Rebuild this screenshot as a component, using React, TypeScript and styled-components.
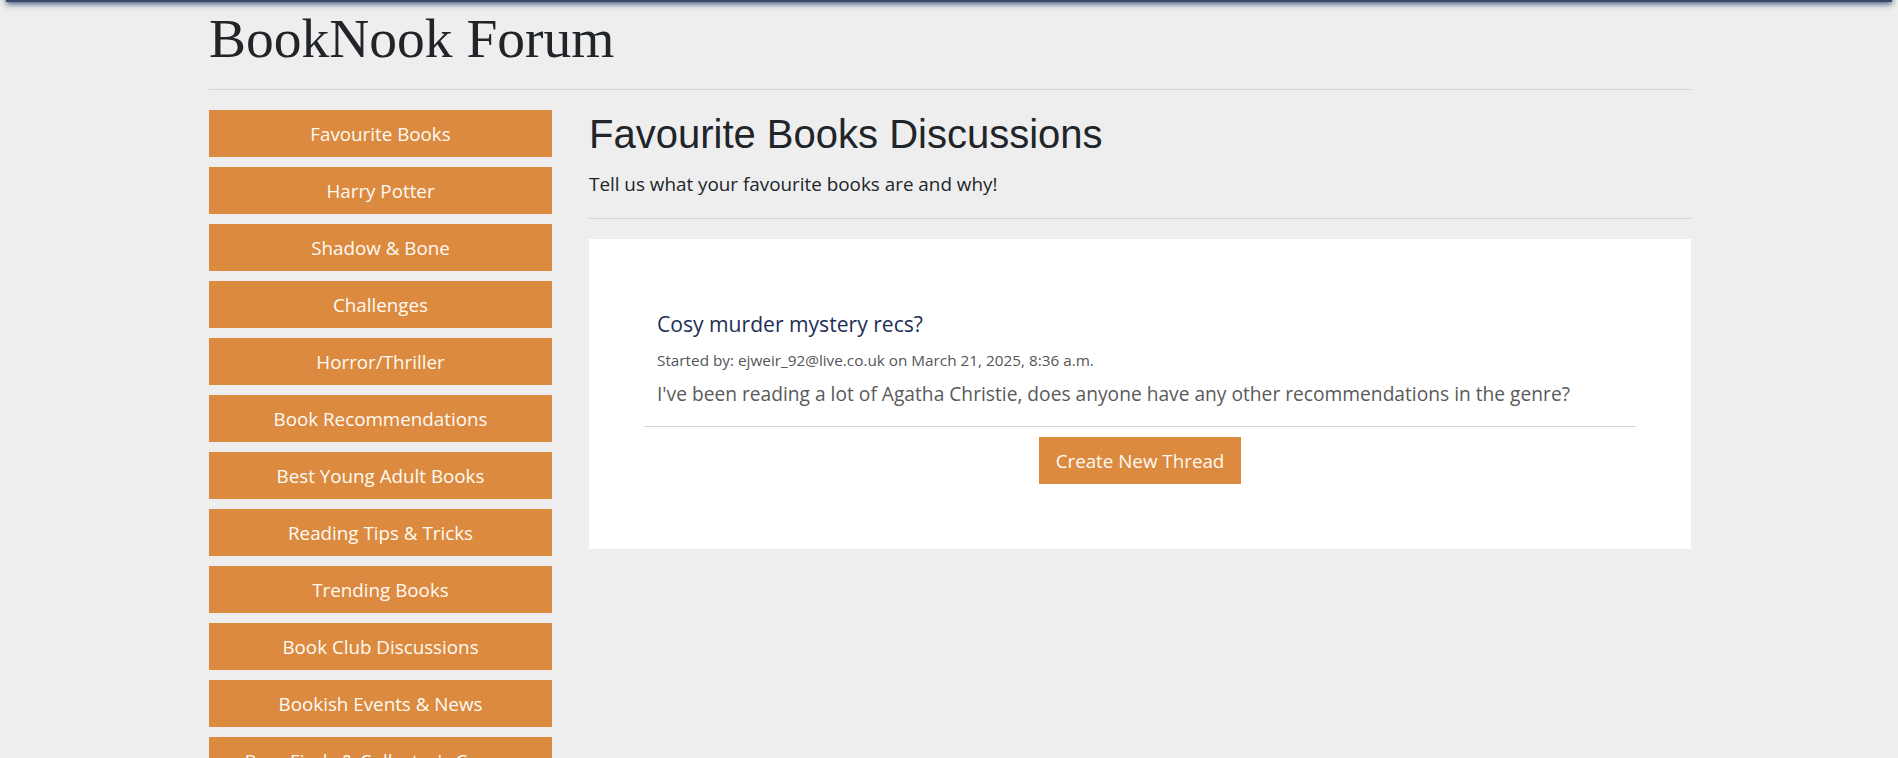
import React from "react";
import styled, { createGlobalStyle } from "styled-components";

const GlobalStyle = createGlobalStyle`
  html, body {
    margin: 0;
    padding: 0;
    background: #eeeeee;
  }
  body {
    font-family: "Open Sans", "Noto Sans", Arial, sans-serif;
    color: #212529;
    overflow: hidden;
  }
  * { box-sizing: border-box; }
`;

const TopShadow = styled.div`
  position: fixed;
  top: -40px;
  left: 6px;
  right: 6px;
  height: 42px;
  background: #3a4a6b;
  box-shadow: 0 2px 6px rgba(40, 60, 100, 0.85);
  z-index: 10;
`;

const Page = styled.div`
  width: 1482px;
  margin-left: calc(50% - 740px);
`;

const Header = styled.header`
  padding-top: 6px;
`;

const SiteTitle = styled.h1`
  margin: 0;
  font-family: "Liberation Serif", "Times New Roman", serif;
  font-weight: 400;
  font-size: 55.5px;
  line-height: 66px;
  color: #212529;
`;

const Rule = styled.hr<{ $top: number; $bottom: number }>`
  border: 0;
  border-top: 1px solid #d4d4d4;
  margin: ${(p) => p.$top}px 0 ${(p) => p.$bottom}px;
  height: 0;
`;

const Layout = styled.div`
  display: grid;
  grid-template-columns: 343px 1fr;
  column-gap: 37px;
  align-items: start;
`;

const Sidebar = styled.nav`
  display: flex;
  flex-direction: column;
  gap: 10px;
`;

const NavButton = styled.a`
  display: block;
  height: 47px;
  padding-top: 2px;
  line-height: 45px;
  background: #db8a3f;
  color: #fffaf4;
  text-align: center;
  text-decoration: none;
  font-size: 18.8px;
  white-space: nowrap;
  overflow: hidden;
`;

const Main = styled.main`
  display: flex;
  flex-direction: column;
`;

const Heading = styled.h2`
  margin: 0 0 10px;
  font-family: "Liberation Sans", Arial, sans-serif;
  font-weight: 400;
  font-size: 40px;
  line-height: 48px;
  color: #212529;
`;

const Lead = styled.p`
  margin: 0;
  padding-top: 1px;
  font-size: 18.85px;
  line-height: 30px;
  color: #212529;
`;

const Card = styled.section`
  background: #ffffff;
  padding: 73px 55px 65px;
  display: flex;
  flex-direction: column;
`;

const Thread = styled.article`
  padding: 0 13px;
`;

const ThreadTitle = styled.a`
  display: block;
  font-size: 21.1px;
  line-height: 24px;
  color: #1d2f56;
  text-decoration: none;
`;

const ThreadMeta = styled.div`
  margin-top: 14px;
  font-size: 15.3px;
  line-height: 21px;
  color: #555555;
`;

const ThreadBody = styled.p`
  margin: 9px 0 0;
  font-size: 19.2px;
  line-height: 28px;
  color: #5a5a5a;
`;

const Actions = styled.div`
  display: flex;
  justify-content: center;
`;

const PrimaryButton = styled.button`
  border: 0;
  height: 47px;
  padding: 1px 16.5px 0;
  background: #db8a3f;
  color: #fffaf4;
  font-family: inherit;
  font-size: 18.8px;
  cursor: pointer;
`;

const topics = [
  "Favourite Books",
  "Harry Potter",
  "Shadow & Bone",
  "Challenges",
  "Horror/Thriller",
  "Book Recommendations",
  "Best Young Adult Books",
  "Reading Tips & Tricks",
  "Trending Books",
  "Book Club Discussions",
  "Bookish Events & News",
  "Rare Finds & Collector's Corner",
];

export default function App() {
  return (
    <>
      <GlobalStyle />
      <TopShadow />
      <Page>
        <Header>
          <SiteTitle>BookNook Forum</SiteTitle>
        </Header>
        <Rule $top={17} $bottom={20} />
        <Layout>
          <Sidebar>
            {topics.map((t) => (
              <NavButton key={t} href="#">
                {t}
              </NavButton>
            ))}
          </Sidebar>
          <Main>
            <Heading>Favourite Books Discussions</Heading>
            <Lead>Tell us what your favourite books are and why!</Lead>
            <Rule $top={19} $bottom={20} />
            <Card>
              <Thread>
                <ThreadTitle href="#">Cosy murder mystery recs?</ThreadTitle>
                <ThreadMeta>
                  Started by: ejweir_92@live.co.uk on March 21, 2025, 8:36 a.m.
                </ThreadMeta>
                <ThreadBody>
                  I've been reading a lot of Agatha Christie, does anyone have any
                  other recommendations in the genre?
                </ThreadBody>
              </Thread>
              <Rule $top={18} $bottom={10} />
              <Actions>
                <PrimaryButton>Create New Thread</PrimaryButton>
              </Actions>
            </Card>
          </Main>
        </Layout>
      </Page>
    </>
  );
}
